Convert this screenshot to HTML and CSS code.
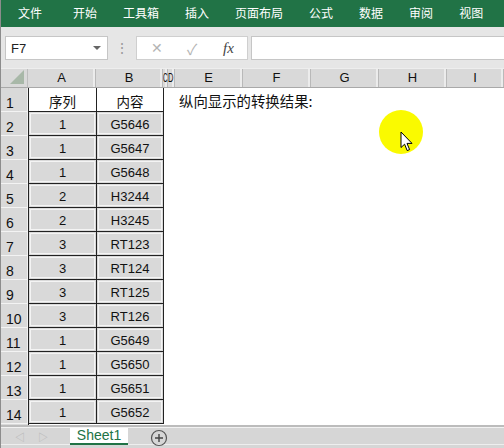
FILE: index.html
```html
<!DOCTYPE html>
<html lang="zh">
<head>
<meta charset="utf-8">
<link rel="stylesheet" href="styles.css">
</head>
<body>
<div class="app">
  <nav class="ribbon">
    <span class="tab first">文件</span>
    <span class="tab">开始</span>
    <span class="tab">工具箱</span>
    <span class="tab">插入</span>
    <span class="tab">页面布局</span>
    <span class="tab">公式</span>
    <span class="tab">数据</span>
    <span class="tab">审阅</span>
    <span class="tab">视图</span>
  </nav>
  <div class="fbar">
    <div class="namebox"><span>F7</span><span class="caret"></span></div>
    <div class="dots">⋮</div>
    <div class="fbtns">
      <span class="fx-x">✕</span>
      <span class="fx-v">✓</span>
      <span class="fx-f">fx</span>
    </div>
    <div class="finput"></div>
  </div>
  <div class="colhdr">
    <div class="corner"><span class="tri"></span></div>
    <div class="ch w68">A</div>
    <div class="ch w67">B</div>
    <div class="ch w5"><span class="squeeze">C</span></div>
    <div class="ch w7"><span class="squeeze">D</span></div>
    <div class="ch w68">E</div>
    <div class="ch w68">F</div>
    <div class="ch w68">G</div>
    <div class="ch w68">H</div>
    <div class="ch last">I</div>
  </div>
  <div class="body">
    <div class="rowhdr">
      <div class="rh">1</div><div class="rh">2</div><div class="rh">3</div><div class="rh">4</div>
      <div class="rh">5</div><div class="rh">6</div><div class="rh">7</div><div class="rh">8</div>
      <div class="rh">9</div><div class="rh">10</div><div class="rh">11</div><div class="rh">12</div>
      <div class="rh">13</div><div class="rh">14</div>
    </div>
    <div class="data">
      <div class="c head">序列</div><div class="c head">内容</div>
      <div class="c">1</div><div class="c">G5646</div>
      <div class="c">1</div><div class="c">G5647</div>
      <div class="c">1</div><div class="c">G5648</div>
      <div class="c">2</div><div class="c">H3244</div>
      <div class="c">2</div><div class="c">H3245</div>
      <div class="c">3</div><div class="c">RT123</div>
      <div class="c">3</div><div class="c">RT124</div>
      <div class="c">3</div><div class="c">RT125</div>
      <div class="c">3</div><div class="c">RT126</div>
      <div class="c">1</div><div class="c">G5649</div>
      <div class="c">1</div><div class="c">G5650</div>
      <div class="c">1</div><div class="c">G5651</div>
      <div class="c">1</div><div class="c">G5652</div>
    </div>
    <div class="rest">
      <div class="note">纵向显示的转换结果:</div>
      <div class="spot">
        <svg class="cursor" width="14" height="22" viewBox="0 0 14 22">
          <path d="M1 1 L1 16.5 L4.6 13.2 L7.2 19.6 L9.6 18.6 L7 12.4 L12 12.4 Z" fill="#fff" stroke="#000" stroke-width="1" stroke-linejoin="round"/>
        </svg>
      </div>
    </div>
  </div>
  <div class="sheetbar">
    <div class="navs"><span>◁</span><span>▷</span></div>
    <div class="stab">Sheet1</div>
    <div class="plus">
      <svg width="18" height="18" viewBox="0 0 18 18">
        <circle cx="9" cy="9" r="7.5" fill="none" stroke="#555" stroke-width="1.2"/>
        <path d="M9 5 V13 M5 9 H13" stroke="#444" stroke-width="1.4"/>
      </svg>
    </div>
  </div>
</div>
</body>
</html>
```

FILE: styles.css
```css
* { box-sizing: border-box; }
html, body { margin: 0; padding: 0; }
body {
  width: 504px;
  height: 448px;
  overflow: hidden;
  font-family: "Liberation Sans", "Noto Sans CJK SC", sans-serif;
  color: #000;
  background: #fff;
}
.app {
  width: 504px;
  height: 448px;
  display: flex;
  flex-direction: column;
  border-left: 1px solid #8c8c8c;
  overflow: hidden;
}
.ribbon {
  height: 27px;
  flex: none;
  background: #217346;
  display: flex;
  align-items: center;
  gap: 26px;
  padding-left: 17px;
  padding-bottom: 1px;
}
.tab {
  color: #fff;
  font-family: "Noto Sans CJK SC", sans-serif;
  font-size: 12px;
  line-height: 14px;
}
.tab.first { margin-right: 5px; }
.fbar {
  height: 41px;
  flex: none;
  background: #e6e6e6;
  display: flex;
  align-items: flex-start;
  padding-top: 9px;
  padding-left: 4px;
}
.namebox {
  width: 103px;
  height: 24px;
  background: #fff;
  border: 1px solid #c6c6c6;
  display: flex;
  align-items: center;
  justify-content: space-between;
  padding: 0 6px 0 5px;
  font-size: 13px;
  color: #222;
}
.caret {
  width: 0; height: 0;
  border-left: 4px solid transparent;
  border-right: 4px solid transparent;
  border-top: 4px solid #666;
}
.dots {
  width: 28px;
  height: 24px;
  color: #9a9a9a;
  font-size: 14px;
  line-height: 24px;
  text-align: center;
}
.fbtns {
  width: 112px;
  height: 24px;
  background: #fff;
  border: 1px solid #cfcfcf;
  display: flex;
  align-items: center;
  padding-left: 14px;
}
.fx-x { color: #b4b4b4; font-size: 14px; width: 36px; }
.fx-v { color: #b4b4b4; font-size: 15px; width: 36px; }
.fx-f { color: #444; font-family: "Liberation Serif", serif; font-style: italic; font-size: 15px; }
.finput {
  flex: 1;
  height: 24px;
  margin-left: 3px;
  background: #fff;
  border: 1px solid #c6c6c6;
  border-right: none;
}
.colhdr {
  height: 20px;
  flex: none;
  display: flex;
  background: #d9d9d9;
  border-top: 1px solid #eeeeee;
  border-bottom: 1px solid #a9a9a9;
}
.corner {
  width: 27px;
  flex: none;
  position: relative;
  border-right: 1px solid #bdbdbd;
}
.tri {
  position: absolute;
  right: 3px;
  bottom: 3px;
  width: 0; height: 0;
  border-left: 14px solid transparent;
  border-bottom: 14px solid #a8b8a8;
}
.ch {
  flex: none;
  display: flex;
  align-items: flex-end;
  justify-content: center;
  font-size: 13px;
  line-height: 14px;
  padding-bottom: 2px;
  color: #111;
  border-right: 1px solid #b9b9b9;
  box-shadow: inset -2px 0 0 #ececec;
}
.w68 { width: 68px; }
.w67 { width: 67px; }
.w5 { width: 5px; justify-content: flex-start; }
.w7 { width: 7px; justify-content: flex-start; }
.squeeze {
  display: inline-block;
  width: 9px;
  transform-origin: left bottom;
  transform: scaleX(0.48);
}
.w7 .squeeze { transform: scaleX(0.58); }
.ch.last { flex: 1; }
.body {
  height: 337px;
  flex: none;
  display: flex;
}
.rowhdr {
  width: 27px;
  flex: none;
  background: #d9d9d9;
  display: grid;
  grid-template-rows: repeat(14, 24px);
  align-content: start;
}
.rh {
  border-bottom: 1px solid #f3f3f3;
  border-right: 1px solid #f0f0f0;
  font-size: 14px;
  line-height: 14px;
  color: #111;
  display: flex;
  align-items: flex-end;
  padding-left: 5px;
  padding-bottom: 1px;
}
.data {
  flex: none;
  width: 136px;
  display: grid;
  grid-template-columns: 68px 67px;
  grid-template-rows: repeat(14, 24px);
  align-content: start;
  border-left: 1px solid #222;
}
.c {
  background: #d9d9d9;
  border-right: 1px solid #222;
  border-bottom: 1px solid #222;
  box-shadow: inset 0 0 0 1px #d9d9d9, inset 0 0 0 2px #f4f4f4;
  display: flex;
  align-items: center;
  justify-content: center;
  padding-top: 2px;
  font-size: 13px;
  color: #111;
}
.c.head {
  background: #fff;
  box-shadow: none;
  font-family: "Noto Sans CJK SC", sans-serif;
  font-size: 13.5px;
}
.rest {
  flex: 1;
  position: relative;
  background: #fff;
}
.note {
  height: 24px;
  padding-left: 15px;
  display: flex;
  align-items: center;
  padding-top: 1px;
  font-family: "Noto Sans CJK SC", sans-serif;
  font-size: 14.4px;
  white-space: nowrap;
  color: #111;
}
.spot {
  position: absolute;
  left: 215px;
  top: 22px;
  width: 44px;
  height: 44px;
  border-radius: 50%;
  background: #fafa00;
}
.cursor {
  position: absolute;
  left: 21px;
  top: 21px;
}
.sheetbar {
  flex: 1;
  background: #d6d6d6;
  border-top: 2px solid #bcbcbc;
  box-shadow: inset 0 1px 0 #f2f2f2, inset 0 -3px 0 #d6d6d6, inset 0 -4px 0 #eeeeee;
  display: flex;
  align-items: flex-start;
  position: relative;
}
.navs {
  width: 69px;
  padding-left: 14px;
  padding-top: 4px;
  display: flex;
  gap: 13px;
  color: #b5b5b5;
  font-size: 10px;
  line-height: 14px;
}
.stab {
  width: 58px;
  height: 17px;
  margin-top: 1px;
  background: #fff;
  border-bottom: 2px solid #217346;
  color: #217346;
  font-size: 14px;
  line-height: 15px;
  text-align: center;
}
.plus {
  margin-left: 22px;
  margin-top: 2px;
  width: 18px;
  height: 18px;
}
```
